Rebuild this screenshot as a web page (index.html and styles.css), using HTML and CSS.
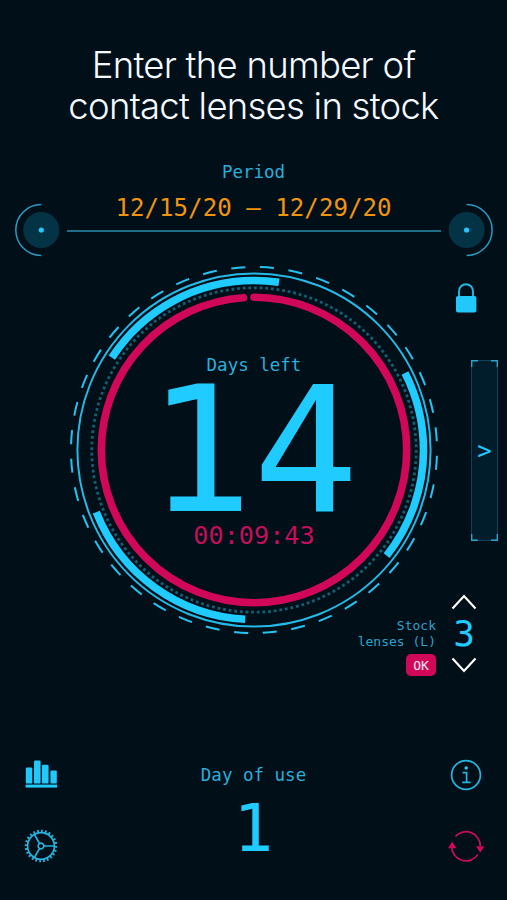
FILE: index.html
```html
<!DOCTYPE html>
<html lang="en">
<head>
  <meta charset="UTF-8">
  <meta name="viewport" content="width=device-width, initial-scale=1.0">
  <title>Contact Lenses Tracker</title>
  <link rel="stylesheet" href="styles.css">
</head>
<body>
  <div class="app">
    <h1>Enter the number of<br>contact lenses in stock</h1>

    <div class="period">
      <svg class="period-end" width="54" height="54" viewBox="0 0 54 54">
        <path class="thin" d="M27.3 1.5 A25.5 25.5 0 0 0 27.3 52.5"/>
        <circle class="disc" cx="27.3" cy="27" r="18"/>
        <circle class="dot" cx="27.3" cy="27" r="2.6"/>
      </svg>
      <div class="period-text">
        <div class="label">Period</div>
        <div class="dates">12/15/20 – 12/29/20</div>
        <div class="line"></div>
      </div>
      <svg class="period-end" width="54" height="54" viewBox="0 0 54 54">
        <path class="thin" d="M27.6 1.5 A25.5 25.5 0 0 1 27.6 52.5"/>
        <circle class="disc" cx="27.6" cy="27" r="18"/>
        <circle class="dot" cx="27.6" cy="27" r="2.6"/>
      </svg>
    </div>

    <main class="main">
      <div class="dial">
        <svg class="rings" width="370" height="370" viewBox="-185 -185 370 370">
          <g transform="rotate(-90)">
            <circle class="ring-dashes" r="183" pathLength="360"/>
            <circle class="ring-outer" r="176.6"/>
            <circle class="ring-arcs" r="169.5" pathLength="360"/>
            <circle class="ring-dots" r="162.2" pathLength="180"/>
            <circle class="ring-progress" r="152.7" pathLength="360"/>
          </g>
        </svg>
        <div class="dial-text">
          <div class="label">Days left</div>
          <div class="days">14</div>
          <div class="time">00:09:43</div>
        </div>
      </div>

      <div class="side">
        <svg class="lock" width="22" height="30" viewBox="0 0 22 30">
          <path class="lock-arc" d="M4 14 V8.2 A7 7 0 0 1 18 8.2 V14"/>
          <rect class="fill" x="1" y="13" width="20.4" height="16.5" rx="2"/>
        </svg>

        <div class="drawer">
          <svg class="corners" width="27" height="181" viewBox="0 0 27 181">
            <path d="M.7 7 V.7 H7 M20 .7 H26.3 V7 M.7 174 V180.3 H7 M20 180.3 H26.3 V174"/>
          </svg>
          <span>&gt;</span>
        </div>

        <div class="stock">
          <div class="stock-info">
            <div class="stock-label">Stock<br>lenses (L)</div>
            <button class="ok">OK</button>
          </div>
          <div class="stepper">
            <svg width="26" height="16" viewBox="0 0 26 16"><path d="M1.5 14.5 L13 2 L24.5 14.5"/></svg>
            <div class="count">3</div>
            <svg width="26" height="16" viewBox="0 0 26 16"><path d="M1.5 1.5 L13 14 L24.5 1.5"/></svg>
          </div>
        </div>
      </div>
    </main>

    <footer class="footer">
      <div class="tools">
        <svg width="34" height="34" viewBox="0 0 34 34">
          <rect class="fill" x="1.8" y="9.6" width="6.5" height="16" rx="1.2"/>
          <rect class="fill" x="10" y="2.6" width="6.6" height="23" rx="1.2"/>
          <rect class="fill" x="18" y="6.8" width="6.6" height="18.8" rx="1.2"/>
          <rect class="fill" x="26.4" y="12.4" width="6.4" height="13.2" rx="1.2"/>
          <rect class="fill" x="1.6" y="26.6" width="31.6" height="3"/>
        </svg>
        <svg width="34" height="34" viewBox="-17 -17 34 34">
          <circle class="gear-teeth" r="14.9" pathLength="48"/>
          <circle class="gear-line" r="13.4"/>
          <circle class="gear-line" r="2.8"/>
          <path class="gear-line" d="M2.8 0 H13.4 M-1.4 -2.4 L-6.7 -11.6 M-1.4 2.4 L-6.7 11.6"/>
        </svg>
      </div>

      <div class="usage">
        <div class="label">Day of use</div>
        <div class="usage-day">1</div>
      </div>

      <div class="tools">
        <svg width="34" height="34" viewBox="-17 -17 34 34">
          <circle class="info-line" r="14.4"/>
          <circle class="dot" cx="0.2" cy="-7" r="1.8"/>
          <path class="info-line" d="M-3.4 -2.4 H.6 V7.4 M-3.8 7.4 H4.6"/>
        </svg>
        <svg width="38" height="34" viewBox="-19 -17 38 34">
          <path class="reset-line" d="M-10.6 -9.6 A14.3 14.3 0 0 1 14.3 0"/>
          <path class="reset-line" d="M12 8.4 A14.3 14.3 0 0 1 -14.3 0"/>
          <path class="reset-head" d="M10 .2 H18.4 L14.2 6.8 Z"/>
          <path class="reset-head" d="M-18 2.2 H-9.6 L-13.8 -4.4 Z"/>
        </svg>
      </div>
    </footer>
  </div>
</body>
</html>
```
FILE: styles.css
```css
body {
  margin: 0;
  background-color: #000f18;
  color: #1fcbff;
  font-family: "DejaVu Sans Mono", Menlo, monospace;
}

.app {
  width: 507px;
  height: 900px;
  box-sizing: border-box;
  padding-top: 45px;
  display: flex;
  flex-direction: column;
  overflow: hidden;
}

h1 {
  margin: 0;
  color: #f4faff;
  font-family: Inter, "Liberation Sans", sans-serif;
  font-size: 36.5px;
  font-weight: 300;
  line-height: 41px;
  letter-spacing: -0.75px;
  text-align: center;
}

.label {
  font-size: 17.5px;
  line-height: 20px;
  text-align: center;
  color: #29afdb;
}

/* Period */
.period {
  display: flex;
  justify-content: space-between;
  align-items: flex-end;
  margin-top: 35px;
  padding: 0 14px;
  height: 95px;
}

.period-text {
  flex: 1;
  padding-bottom: 25px;
}

.dates {
  margin: 11px 0 7px;
  font-size: 24.15px;
  line-height: 30px;
  text-align: center;
  color: #f09410;
  white-space: nowrap;
}

.line {
  height: 2px;
  margin: 0 -2px 0 -1px;
  background-color: #1d6f88;
}

.thin {
  fill: none;
  stroke: #279cc4;
  stroke-width: 1.5;
}

.disc {
  fill: #053346;
}

.dot,
.fill {
  fill: #23c8fa;
}

/* Dial */
.main {
  display: grid;
  height: 424px;
  margin-top: 9px;
}

.dial,
.side {
  grid-area: 1 / 1;
}

.dial {
  display: grid;
  justify-content: center;
  align-content: start;
  margin-top: -1px;
  padding-left: 1px;
}

.rings,
.dial-text {
  grid-area: 1 / 1;
}

.rings circle {
  fill: none;
}

.ring-dashes {
  stroke: #23c4f2;
  stroke-width: 2;
  stroke-dasharray: 4.4 4.6;
  stroke-dashoffset: -1.85;
}

.ring-outer {
  stroke: #25b9e6;
  stroke-width: 2;
}

.ring-arcs {
  stroke: #1fcbff;
  stroke-width: 7.6;
  stroke-dasharray: 65.5 54.5;
  stroke-dashoffset: 57;
}

.ring-dots {
  stroke: #125f73;
  stroke-width: 2.8;
  stroke-dasharray: 0.5 0.5;
}

.ring-progress {
  stroke: #d1085a;
  stroke-width: 7.6;
  stroke-linecap: round;
  stroke-dasharray: 356 4;
}

.dial-text {
  padding-top: 90px;
  text-align: center;
}

.days {
  margin-top: 10px;
  padding-right: 2px;
  font-size: 175.5px;
  line-height: 130px;
}

.time {
  margin-top: 6px;
  font-size: 25.2px;
  line-height: 30px;
  color: #c30f5b;
}

/* Right side controls */
.side {
  display: flex;
  flex-direction: column;
  align-items: flex-end;
}

.lock {
  margin: 17px 30px 0 0;
}

.lock-arc {
  fill: none;
  stroke: #23b9e8;
  stroke-width: 1.9;
}

.drawer {
  display: grid;
  place-items: center;
  width: 27px;
  height: 181px;
  margin: 47px 9px 0 0;
  background-color: #011d2b;
  box-shadow: inset 0 0 0 1px #0b4259;
  font-size: 24px;
}

.drawer > * {
  grid-area: 1 / 1;
}

.corners path {
  fill: none;
  stroke: #2aa5cc;
  stroke-width: 1.4;
}

.stock {
  display: flex;
  align-items: flex-start;
  margin: 53px 30px 0 0;
  gap: 15px;
}

.stock-info {
  display: flex;
  flex-direction: column;
  align-items: flex-end;
  padding-top: 24px;
}

.stock-label {
  font-size: 13px;
  line-height: 16px;
  text-align: right;
  color: #2ba3ca;
}

.ok {
  width: 30px;
  height: 22px;
  margin-top: 4px;
  padding: 0;
  border: none;
  border-radius: 5px;
  background-color: #d1085a;
  color: #ffe9f2;
  font-family: inherit;
  font-size: 13px;
}

.stepper {
  display: flex;
  flex-direction: column;
  align-items: center;
}

.stepper path {
  fill: none;
  stroke: #fff;
  stroke-width: 2.2;
}

.count {
  font-size: 36px;
  line-height: 47px;
}

/* Footer */
.footer {
  display: flex;
  justify-content: space-between;
  margin-top: 68px;
  padding: 0 22px;
}

.tools {
  display: flex;
  flex-direction: column;
  align-items: center;
  gap: 37px;
  width: 38px;
}

.usage {
  padding-top: 7px;
  text-align: center;
}

.usage-day {
  margin-top: 5px;
  font-size: 66px;
  line-height: 78px;
}

.gear-line,
.gear-teeth,
.info-line,
.reset-line {
  fill: none;
  stroke: #25b4e0;
  stroke-width: 1.7;
}

.gear-teeth {
  stroke-width: 2.8;
  stroke-dasharray: 0.9 1.1;
}

.reset-line {
  stroke: #c70d59;
}

.reset-head {
  fill: #d1085a;
}
```
